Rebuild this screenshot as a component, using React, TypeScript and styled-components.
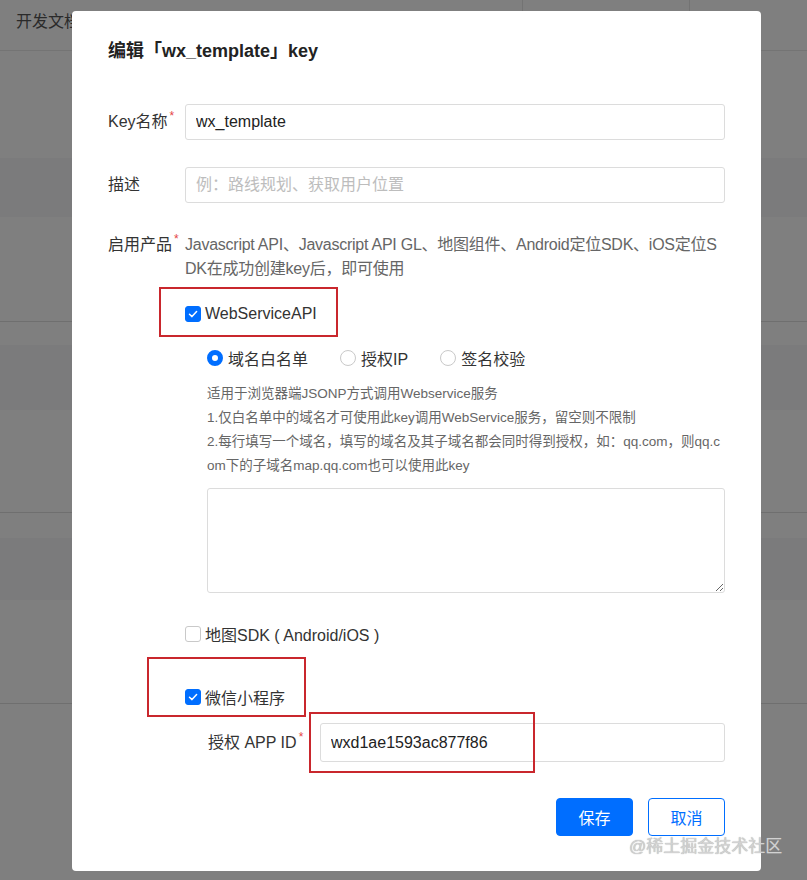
import React from 'react';
import styled, { createGlobalStyle } from 'styled-components';

const GlobalStyle = createGlobalStyle`
  html, body { margin: 0; padding: 0; }
  body {
    font-family: "Liberation Sans", "Noto Sans CJK SC", sans-serif;
    background: #fff;
  }
  * { box-sizing: border-box; }
`;

const Page = styled.div`
  position: relative;
  width: 807px;
  height: 880px;
  overflow: hidden;
  background: #fff;
`;

const Header = styled.header`
  height: 51px;
  display: flex;
  align-items: flex-start;
  justify-content: space-between;
  padding: 0 117px 0 16px;
  border-bottom: 1px solid #e8e8e8;
`;

const HeaderTitle = styled.div`
  font-size: 16px;
  line-height: 44px;
  color: #555;
`;

const SearchBox = styled.div`
  width: 168px;
  height: 38px;
  border: 1px solid #e6e6e6;
  border-top: none;
  border-radius: 0 0 3px 3px;
`;

const ListSection = styled.section<{ $height: number; $bandTop: number; $bandHeight: number }>`
  height: ${p => p.$height}px;
  border-bottom: 1px solid #dedede;
  padding-top: ${p => p.$bandTop}px;

  &::before {
    content: "";
    display: ${p => (p.$bandHeight > 0 ? 'block' : 'none')};
    height: ${p => p.$bandHeight}px;
    background: #f7f7f9;
  }
`;

const Overlay = styled.div`
  position: absolute;
  inset: 0;
  background: rgba(0, 0, 0, 0.5);
`;

const Modal = styled.div`
  position: absolute;
  left: 72px;
  top: 11px;
  width: 689px;
  background: #fff;
  border-radius: 4px;
  padding: 28px 36px 35px;
`;

const Title = styled.h2`
  margin: 0;
  font-size: 18px;
  font-weight: 700;
  line-height: 24px;
  color: #222;
`;

const Form = styled.div`
  margin-top: 41px;
  display: flex;
  flex-direction: column;
`;

const Row = styled.div<{ $mt?: number; $top?: boolean; $indent?: number }>`
  display: flex;
  align-items: ${p => (p.$top ? 'flex-start' : 'center')};
  margin-top: ${p => p.$mt ?? 0}px;
  padding-left: ${p => p.$indent ?? 0}px;
`;

const Label = styled.label<{ $width?: number }>`
  flex: 0 0 ${p => p.$width ?? 77}px;
  font-size: 16px;
  line-height: 24px;
  color: #333;
  white-space: nowrap;
`;

const Required = styled.span`
  color: #e54545;
  font-size: 12px;
  line-height: 12px;
  vertical-align: top;
  margin-left: 2px;
`;

const TextInput = styled.input<{ $h?: number }>`
  flex: 1;
  min-width: 0;
  height: ${p => p.$h ?? 36}px;
  border: 1px solid #dcdcdc;
  border-radius: 3px;
  padding: 0 10px;
  font-size: 16px;
  font-family: inherit;
  color: #222;
  outline: none;
  background: #fff;

  &::placeholder { color: #bdbdbd; }
`;

const Content = styled.div`
  flex: 1;
  min-width: 0;
  display: flex;
  flex-direction: column;
`;

const ProductDesc = styled.div`
  font-size: 16px;
  line-height: 24px;
  color: #666;
  word-break: break-all;
  letter-spacing: -0.25px;
`;

const CheckRow = styled.label<{ $mt: number }>`
  display: flex;
  align-items: center;
  gap: 4px;
  height: 24px;
  margin-top: ${p => p.$mt}px;
  font-size: 16px;
  color: #333;
`;

const CheckBox = styled.span<{ $checked?: boolean }>`
  flex: 0 0 16px;
  width: 16px;
  height: 16px;
  border-radius: 3px;
  display: flex;
  align-items: center;
  justify-content: center;
  background: ${p => (p.$checked ? '#006eff' : '#fff')};
  border: 1px solid ${p => (p.$checked ? '#006eff' : '#c9c9c9')};
`;

const SubBlock = styled.div`
  padding-left: 22px;
  display: flex;
  flex-direction: column;
`;

const RadioGroup = styled.div`
  display: flex;
  gap: 32px;
  margin-top: 20px;
  height: 24px;
  align-items: center;
`;

const RadioItem = styled.label`
  display: flex;
  align-items: center;
  gap: 5px;
  font-size: 16px;
  color: #333;
`;

const RadioDot = styled.span<{ $checked?: boolean }>`
  width: 16px;
  height: 16px;
  border-radius: 50%;
  background: #fff;
  border: ${p => (p.$checked ? '5px solid #006eff' : '1px solid #c9c9c9')};
`;

const Help = styled.div`
  margin-top: 12px;
  font-size: 13.5px;
  line-height: 24px;
  color: #666;
  word-break: break-all;
`;

const TextArea = styled.textarea`
  margin-top: 10px;
  width: 100%;
  height: 105px;
  border: 1px solid #dcdcdc;
  border-radius: 3px;
  resize: vertical;
  font-family: inherit;
  font-size: 14px;
  padding: 8px 10px;
  outline: none;
  display: block;
`;

const Footer = styled.div`
  margin-top: 36px;
  display: flex;
  justify-content: flex-end;
  gap: 15px;
`;

const Button = styled.button<{ $primary?: boolean }>`
  width: 77px;
  height: 38px;
  border-radius: 4px;
  font-size: 16px;
  font-family: inherit;
  cursor: pointer;
  background: ${p => (p.$primary ? '#006eff' : '#fff')};
  color: ${p => (p.$primary ? '#fff' : '#006eff')};
  border: 1px solid #006eff;
`;

const Annotation = styled.div<{ $l: number; $t: number; $w: number; $h: number }>`
  position: absolute;
  left: ${p => p.$l}px;
  top: ${p => p.$t}px;
  width: ${p => p.$w}px;
  height: ${p => p.$h}px;
  border: 2px solid #c9272d;
  pointer-events: none;
`;

const Watermark = styled.div`
  position: absolute;
  left: 629px;
  top: 836px;
  font-size: 17px;
  line-height: 22px;
  color: #d2d2d2;
  text-shadow: 0 0 1px #9a9a9a;
  white-space: nowrap;
`;

const Check = () => (
  <svg width="12" height="12" viewBox="0 0 12 12">
    <polyline points="2.5,6.3 5,8.6 9.6,3.6" fill="none" stroke="#fff" strokeWidth="1.5" strokeLinecap="round" strokeLinejoin="round" />
  </svg>
);

export default function App() {
  return (
    <Page>
      <GlobalStyle />
      <Header>
        <HeaderTitle>开发文档</HeaderTitle>
        <SearchBox />
      </Header>
      <ListSection $height={271} $bandTop={107} $bandHeight={59} />
      <ListSection $height={191} $bandTop={23} $bandHeight={65} />
      <ListSection $height={191} $bandTop={25} $bandHeight={62} />
      <ListSection $height={180} $bandTop={0} $bandHeight={0} />
      <Overlay />
      <Modal>
        <Title>编辑「wx_template」key</Title>
        <Form>
          <Row>
            <Label>Key名称<Required>*</Required></Label>
            <TextInput defaultValue="wx_template" />
          </Row>
          <Row $mt={27}>
            <Label>描述</Label>
            <TextInput placeholder="例：路线规划、获取用户位置" />
          </Row>
          <Row $mt={30} $top>
            <Label>启用产品<Required>*</Required></Label>
            <Content>
              <ProductDesc>
                Javascript API、Javascript API GL、地图组件、Android定位SDK、iOS定位SDK在成功创建key后，即可使用
              </ProductDesc>
              <CheckRow $mt={21}>
                <CheckBox $checked><Check /></CheckBox>
                WebServiceAPI
              </CheckRow>
              <SubBlock>
                <RadioGroup>
                  <RadioItem><RadioDot $checked />域名白名单</RadioItem>
                  <RadioItem><RadioDot />授权IP</RadioItem>
                  <RadioItem><RadioDot />签名校验</RadioItem>
                </RadioGroup>
                <Help>
                  <div>适用于浏览器端JSONP方式调用Webservice服务</div>
                  <div>1.仅白名单中的域名才可使用此key调用WebService服务，留空则不限制</div>
                  <div>2.每行填写一个域名，填写的域名及其子域名都会同时得到授权，如：qq.com，则qq.com下的子域名map.qq.com也可以使用此key</div>
                </Help>
                <TextArea />
              </SubBlock>
              <CheckRow $mt={29}>
                <CheckBox />
                地图SDK ( Android/iOS )
              </CheckRow>
              <CheckRow $mt={39}>
                <CheckBox $checked><Check /></CheckBox>
                微信小程序
              </CheckRow>
            </Content>
          </Row>
          <Row $mt={14} $indent={100}>
            <Label $width={112}>授权 APP ID<Required>*</Required></Label>
            <TextInput $h={39} defaultValue="wxd1ae1593ac877f86" />
          </Row>
          <Footer>
            <Button $primary>保存</Button>
            <Button>取消</Button>
          </Footer>
        </Form>
        <Annotation $l={87} $t={276} $w={179} $h={50} />
        <Annotation $l={75} $t={646} $w={159} $h={60} />
        <Annotation $l={237} $t={701} $w={226} $h={61} />
      </Modal>
      <Watermark>@稀土掘金技术社区</Watermark>
    </Page>
  );
}
